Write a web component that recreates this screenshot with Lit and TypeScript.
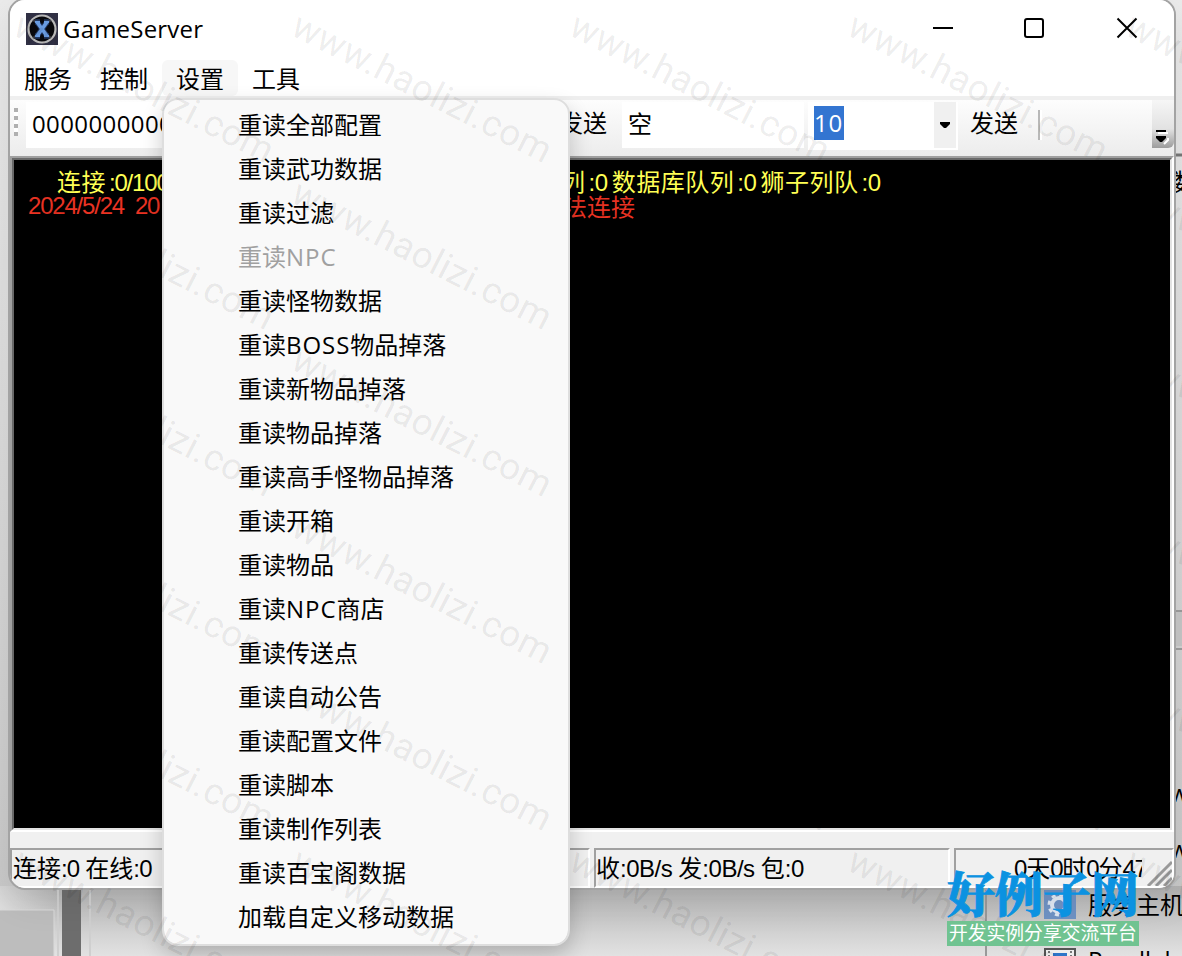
import { LitElement, html, css, svg } from "lit";
import { customElement } from "lit/decorators.js";

const MENU = ["重读全部配置", "重读武功数据", "重读过滤", "重读NPC", "重读怪物数据", "重读BOSS物品掉落", "重读新物品掉落", "重读物品掉落", "重读高手怪物品掉落", "重读开箱", "重读物品", "重读NPC商店", "重读传送点", "重读自动公告", "重读配置文件", "重读脚本", "重读制作列表", "重读百宝阁数据", "加载自定义移动数据"];

@customElement("server-menu")
class ServerMenu extends LitElement {
  static styles = css`
    :host { display: block; box-sizing: border-box; width: 408px; height: 848px; padding: 5px 0 0 74px; border: 2px solid #dedede; border-radius: 16px; background: #f9f9f9; background-clip: padding-box; box-shadow: 0 10px 22px rgba(0,0,0,.2); }
    .item { height: 44px; line-height: 40px; font-size: 24px; white-space: nowrap; color: #000; }
    .off { color: #a0a0a0; }
    .lat { letter-spacing: .95px; }
  `;
  render() {
    return MENU.map((m) => html`<div class="item ${m === "重读NPC" ? "off" : ""}">${m.split(/([A-Z]+)/).map((p) => (/[A-Z]/.test(p) ? html`<span class="lat">${p}</span>` : p))}</div>`);
  }
}

@customElement("page-watermark")
class PageWatermark extends LitElement {
  static styles = css`
    :host, svg { display: block; width: 1182px; height: 956px; }
    text { font-family: Roboto, sans-serif; font-size: 37px; fill: #000; fill-opacity: .08; }
  `;
  render() {
    const marks = [];
    for (let c = 0; c < 5; c++)
      for (let r = 0; r < 6; r++)
        marks.push(svg`<text textLength="286" transform="translate(${11 + c * 278} ${34 + r * 167}) rotate(27)">www.haolizi.com</text>`);
    return html`<svg viewBox="0 0 1182 956">${marks}</svg>`;
  }
}

@customElement("app-root")
class AppRoot extends LitElement {
  static styles = css`
    :host { display: block; position: relative; width: 1182px; height: 956px; overflow: hidden; background: #dcdcdc; font-family: "Open Sans", "Noto Sans CJK SC", sans-serif; font-size: 24px; color: #000; }
    * { box-sizing: border-box; }
    .desk { position: absolute; inset: 0; width: 1182px; height: 956px; }
    .win { position: absolute; left: 8px; top: -2px; width: 1168px; height: 892px; border: 2px solid #a3a3a3; border-radius: 17px; background: #f0f0f0; overflow: hidden; display: flex; flex-direction: column; box-shadow: 0 12px 36px rgba(0,0,0,.08); }
    .title { height: 60px; background: #fff; display: flex; align-items: flex-start; padding: 13px 0 0 16px; }
    .name { margin-left: 5px; line-height: 32px; letter-spacing: .2px; flex: 1; }
    .ctl { margin-right: 33px; width: 210px; height: 32px; }
    .menubar { height: 36px; background: #fff; display: flex; }
    .mb { width: 76px; padding-left: 14px; line-height: 37px; white-space: nowrap; }
    .mb.on { background: #f7f7f7; border-radius: 6px; }
    .bar { height: 60px; border-top: 4px solid #efefef; background: linear-gradient(#fdfdfd, #ececec); display: flex; align-items: flex-start; padding-left: 4px; }
    .grip { width: 4px; height: 28px; margin-top: 8px; background: repeating-linear-gradient(#b0b0b0 0 4px, #fff 4px 8px); }
    .box { background: #fff; height: 46px; margin-top: 2px; line-height: 43px; white-space: nowrap; padding-left: 6px; }
    .zero { width: 500px; margin-left: 8px; letter-spacing: .4px; }
    .send { line-height: 46px; white-space: nowrap; }
    .s1 { margin-left: 33px; width: 48px; }
    .kong { margin-left: 15px; width: 182px; }
    .combo { margin-left: 4px; width: 150px; height: 48px; display: flex; }
    .sel { height: 34px; width: 30px; margin-top: 4px; line-height: 34px; background: #3375d1; color: #fff; letter-spacing: .8px; }
    .drop { margin-left: 90px; width: 22px; height: 46px; background: #f0f0f0; }
    .s2 { margin-left: 12px; width: 48px; }
    .sep { margin: 10px 0 0 20px; width: 4px; height: 30px; background: linear-gradient(90deg, #b8b8b8 50%, #fff 50%); }
    .over { margin-left: 110px; width: 22px; height: 48px; border-radius: 0 0 6px 0; background: linear-gradient(#f6f6f6, #e2e2e2 60%, #9c9c9c); }
    .edge { height: 676px; border-style: solid; border-width: 2px; border-color: #a0a0a0 #fff #fff #a0a0a0; }
    .log { height: 672px; background: #000; border: 2px solid; border-color: #696969 #e3e3e3 #e3e3e3 #696969; padding-top: 8px; overflow: hidden; }
    .line { display: flex; height: 25px; line-height: 27px; white-space: nowrap; }
    .yel { color: #ffff54; padding-left: 43px; letter-spacing: .5px; }
    .red { color: #ea3323; padding-left: 14px; }
    .l1 { width: 504px; }
    .l1 .d { letter-spacing: -1.2px; }
    .l2 { width: 511px; line-height: 25px; }
    .n { font-family: "Liberation Sans", sans-serif; letter-spacing: -1.2px; }
    .d { margin: 0 3.8px 0 3px; letter-spacing: -.3px; }
    .status { flex: 1; padding-top: 16px; display: flex; gap: 4px; }
    .cell { height: 40px; border: 2px solid; border-color: #a0a0a0 #fff #fff #a0a0a0; line-height: 36px; white-space: nowrap; overflow: hidden; }
    .c1 { width: 580px; padding-left: 1px; }
    .c1 .n { letter-spacing: -.8px; }
    .c2 { width: 356px; }
    .c2 .n { letter-spacing: -.5px; }
    .c3 { width: 220px; display: flex; justify-content: space-between; padding-left: 58px; }
    .up { width: 128px; overflow: hidden; }
    .menu, .mark { position: absolute; }
    .menu { left: 162px; top: 98px; }
    .mark { left: 0; top: 0; }
    .brand { position: absolute; left: 947px; top: 866px; width: 192px; }
    .big { font-family: "Noto Serif CJK SC", "Noto Sans CJK SC", serif; font-weight: 900; font-size: 48px; height: 55px; line-height: 51px; color: #0b92e1; -webkit-text-stroke: .8px #0b92e1; white-space: nowrap; }
    .tag { height: 25px; line-height: 24px; font-size: 18.8px; color: #fff; background: #70c391; padding-left: 2px; white-space: nowrap; }
    .bt { font-size: 24px; }
  `;
  render() {
    return html`
      <svg class="desk" viewBox="0 0 1182 956">
        <defs>
          <linearGradient id="a" x2="0" y2="1"><stop stop-color="#ebebeb"/><stop offset=".5" stop-color="#dadada"/><stop offset="1" stop-color="#c8c8c8"/></linearGradient>
          <linearGradient id="b" x2="0" y2="1"><stop stop-color="#b2b2b2"/><stop offset="1" stop-color="#e2e2e2"/></linearGradient>
          <linearGradient id="c"><stop stop-color="#fff" stop-opacity=".45"/><stop offset="1" stop-color="#fff" stop-opacity="0"/></linearGradient>
        </defs>
        <rect width="1182" height="890" fill="url(#a)"/>
        <rect y="886" width="1182" height="70" fill="url(#b)"/>
        <rect y="886" width="60" height="70" fill="url(#c)"/>
        <rect width="54" y="910" height="46" fill="#bdbdbd"/><path d="M0 910H54V956" fill="none" stroke="#dadada"/>
        <rect x="62" y="880" width="19" height="76" fill="#6d6d6d"/><path d="M58 888V956M90 888V956" stroke="#cfcfcf" stroke-width="2"/>
        <rect x="986" y="888" width="196" height="68" fill="url(#b)"/><path d="M986 888V956" stroke="#999" stroke-width="2"/>
        <path d="M1174 155H1182" stroke="#777" stroke-width="3"/>
        <rect x="1174" y="612" width="8" height="34" fill="#c6c6c6"/><path d="M1174 611H1182M1174 649H1182" stroke="#9c9c9c" stroke-width="2"/>
        <g class="bt"><text x="1173" y="191">数</text><text x="1170" y="802">w</text><text x="1170" y="858">w</text><text x="1088" y="914">服务主机</text><text x="1088" y="969">Parallels</text></g>
        <rect x="1044" y="888" width="32" height="31" fill="#6f92c4"/>
        <circle cx="1059" cy="905" r="7" fill="none" stroke="#dfe8f3" stroke-width="4"/><circle cx="1059" cy="905" r="10" fill="none" stroke="#dfe8f3" stroke-width="3" stroke-dasharray="4 3.85"/>
        <rect x="1045" y="949" width="30" height="12" fill="#eee" stroke="#555" stroke-width="2"/><rect x="1053" y="953" width="14" height="6" fill="#2e75c8"/><path d="M1049 951V956M1071 951V956" stroke="#777" stroke-width="2" stroke-dasharray="2 2"/>
      </svg>
      <div class="win">
        <div class="title">
          <svg width="32" height="32" viewBox="0 0 32 32"><rect width="32" height="32" fill="#303044"/><circle cx="16" cy="16" r="13.5" fill="#08080c" stroke="#b8b8b8" stroke-width="2.2"/><path d="M7 7l5 4M25 7l-5 4M7 25l5-4M25 25l-5-4" stroke="#3f4049" stroke-width="2"/><path d="M11 9L21 23M21 9L11 23M9 9h5M18 9h5M9 23h5M18 23h5" stroke="#20365e" stroke-width="5.5"/><path d="M11 9L21 23M21 9L11 23" stroke="#699be0" stroke-width="3.6"/><path d="M9 9h5M18 9h5M9 23h5M18 23h5" stroke="#699be0" stroke-width="2"/></svg>
          <div class="name">GameServer</div>
          <svg class="ctl" viewBox="0 0 210 32" fill="none" stroke="#000" stroke-width="2"><path d="M2 15H22"/><rect x="94" y="6" width="18" height="18" rx="2"/><path d="M186.500 5.500L205.500 24.500M205.500 5.500L186.500 24.500"/></svg>
        </div>
        <div class="menubar"><div class="mb">服务</div><div class="mb">控制</div><div class="mb on">设置</div><div class="mb">工具</div></div>
        <div class="bar">
          <div class="grip"></div><div class="box zero">0000000000000</div><div class="send s1">发送</div><div class="box kong">空</div>
          <div class="box combo"><span class="sel">10</span><svg class="drop" viewBox="0 0 22 46"><path d="M6 20h10v2l-4 4h-2l-4-4z"/></svg></div>
          <div class="send s2">发送</div><div class="sep"></div>
          <svg class="over" viewBox="0 0 22 48"><path d="M6 33h10M16 38v2l-4 4" stroke="#fff" stroke-width="2" fill="none"/><path d="M4 30h10v2h-10zM4 36h10v2l-4 4h-2l-4-4z"/></svg>
        </div>
        <div class="edge"><div class="log">
          <div class="line yel"><div class="l1">连接<span class="n d">:0/1000</span></div><div>列<span class="n d">:0</span>数据库队列<span class="n d">:0</span>狮子列队<span class="n d">:0</span></div></div>
          <div class="line red"><div class="l2 n">2024/5/24&nbsp; 20</div><div>无法连接</div></div>
        </div></div>
        <div class="status">
          <div class="cell c1">连接<span class="n">:0 </span>在线<span class="n">:0</span></div>
          <div class="cell c2">收<span class="n">:0B/s </span>发<span class="n">:0B/s </span>包<span class="n">:0</span></div>
          <div class="cell c3"><div class="up"><span class="n">0</span>天<span class="n">0</span>时<span class="n">0</span>分<span class="n">47</span></div><svg width="26" height="36" viewBox="0 0 26 36"><path d="M2 36L26 12M10 36L26 20M18 36L26 28" stroke="#999" stroke-width="3"/></svg></div>
        </div>
      </div>
      <server-menu class="menu"></server-menu>
      <page-watermark class="mark"></page-watermark>
      <div class="brand"><div class="big">好例子网</div><div class="tag">开发实例分享交流平台</div></div>
    `;
  }
}
